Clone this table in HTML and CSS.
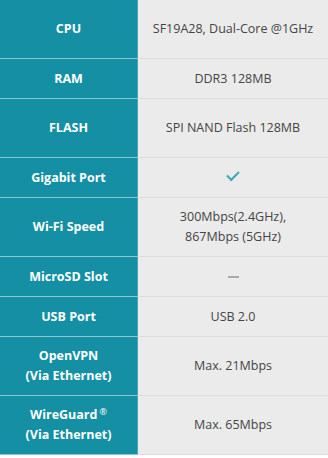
FILE: index.html
```html
<!DOCTYPE html>
<html>
<head>
<meta charset="utf-8">
<link rel="stylesheet" href="styles.css">
</head>
<body>
<table class="spec">
  <tr class="tall"><th>CPU</th><td>SF19A28, Dual-Core @1GHz</td></tr>
  <tr><th>RAM</th><td>DDR3 128MB</td></tr>
  <tr class="tall"><th>FLASH</th><td>SPI NAND Flash 128MB</td></tr>
  <tr><th>Gigabit Port</th><td><span class="check"></span></td></tr>
  <tr class="tall"><th>Wi-Fi Speed</th><td>300Mbps(2.4GHz),<br>867Mbps (5GHz)</td></tr>
  <tr><th>MicroSD Slot</th><td><span class="dash"></span></td></tr>
  <tr><th>USB Port</th><td>USB 2.0</td></tr>
  <tr class="tall"><th>OpenVPN<br>(Via Ethernet)</th><td>Max. 21Mbps</td></tr>
  <tr class="tall"><th>WireGuard<sup>®</sup><br>(Via Ethernet)</th><td>Max. 65Mbps</td></tr>
</table>
</body>
</html>
```
FILE: styles.css
```css
html, body {
  margin: 0;
  padding: 0;
  background: #ffffff;
}
.spec {
  width: 328px;
  border-collapse: collapse;
  font-family: "Open Sans", sans-serif;
  font-size: 12.5px;
  line-height: 20px;
  table-layout: fixed;
}
.spec th, .spec td {
  height: 39px;
  padding: 0 4px;
  text-align: center;
  vertical-align: middle;
}
.spec tr.tall th, .spec tr.tall td {
  height: 58px;
}
.spec th {
  width: 129px;
  background: #148fa3;
  color: #ffffff;
  font-weight: 700;
  border-bottom: 1px solid #8cc6cf;
  border-right: 1px solid #45a6b5;
}
.spec td {
  background: #ebebeb;
  color: #454545;
  font-weight: 400;
  border-bottom: 1px solid #dddddd;
}
.spec sup {
  font-size: 9px;
  line-height: 0;
  vertical-align: 4px;
  font-weight: 400;
  margin-left: 2px;
}
.check {
  display: inline-block;
  width: 10px;
  height: 5px;
  border-left: 2px solid #3aa9b7;
  border-bottom: 2px solid #3aa9b7;
  transform: rotate(-45deg);
  margin-bottom: 4px;
}
.dash {
  display: inline-block;
  width: 11px;
  height: 2px;
  background: #a9a9a9;
  vertical-align: middle;
}
```
